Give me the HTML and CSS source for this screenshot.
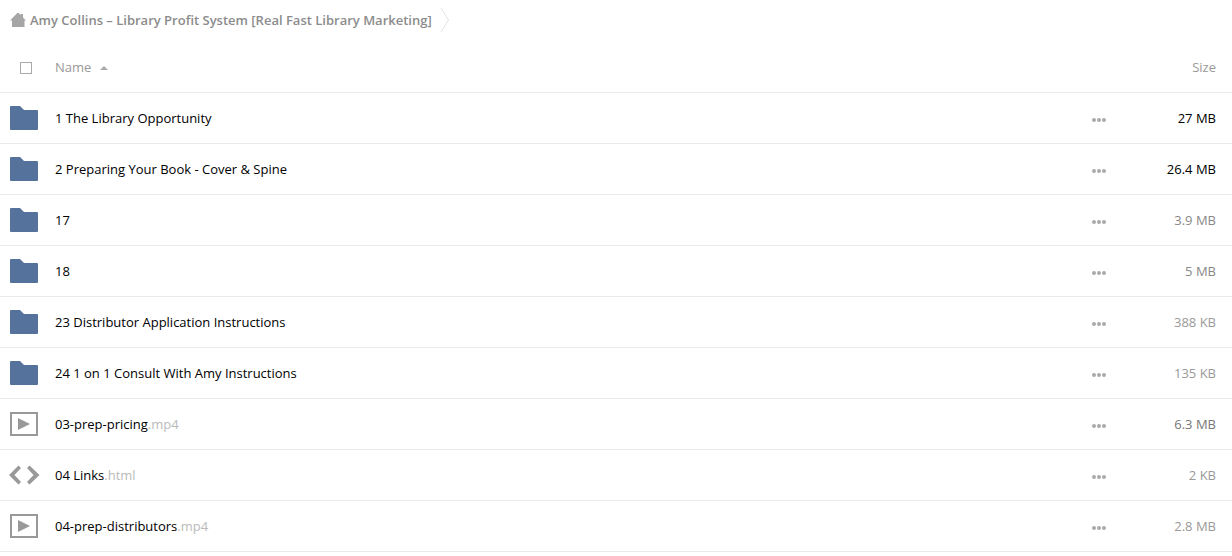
FILE: index.html
```html
<!DOCTYPE html>
<html lang="en">
    <head>
        <meta charset="utf-8">
        <title>Files</title>
        <link rel="stylesheet" href="styles.css">
    </head>
    <body>
        <nav class="breadcrumb">
            <a class="crumb" href="#">
                <svg class="home" width="16" height="14" viewBox="0 0 16 14"><path d="M7.300 0h1.200L10.500 2V1H13v3.500L16 7.500H14.500V14H2V7.500H0z"/></svg>
                <span>Amy Collins – Library Profit System [Real Fast Library Marketing]</span>
            </a>
            <svg class="divider" width="10" height="26" viewBox="0 0 10 26"><path d="M1 1L8.500 13L1 25"/></svg>
        </nav>
        <table id="filelist">
            <thead>
                <tr>
                    <th class="select"><input type="checkbox" class="check" aria-label="Select all"></th>
                    <th class="name"><button class="sort">Name <span class="arrow"></span></button></th>
                    <th class="actions"></th>
                    <th class="size"><button class="sort">Size</button></th>
                </tr>
            </thead>
            <tbody id="files"></tbody>
        </table>
        <script src="files.js"></script>
    </body>
</html>
```

FILE: styles.css
```css
body {
    margin: 0;
    font-family: "Open Sans", "Noto Sans", sans-serif;
    font-size: 13px;
    line-height: 20px;
    background: #fff;
    color: #000;
}

/* path bar */
.breadcrumb {
    display: flex;
    align-items: center;
    height: 40px;
    padding: 0 10px;
    margin-bottom: 3px;
    gap: 8px;
}
.crumb {
    display: flex;
    align-items: center;
    gap: 4px;
    font-weight: 600;
    color: #8c8c8c;
    text-decoration: none;
}
.home {
    fill: #a6a6a6;
}
.divider {
    fill: none;
    stroke: #e3e3e3;
}

/* file list */
#filelist {
    width: 100%;
    border-spacing: 0;
    table-layout: fixed;
}
#filelist th, #filelist td {
    height: 50px;
    padding: 0;
    border-bottom: 1px solid #ebebeb;
    text-align: left;
    font-weight: normal;
}
#filelist th {
    height: 49px;
    color: #999;
}
#filelist .select {
    width: 55px;
}
#filelist .actions {
    width: 50px;
    text-align: center;
}
#filelist .size {
    width: 92px;
    padding-right: 16px;
    text-align: right;
}
.check {
    appearance: none;
    display: block;
    width: 12px;
    height: 12px;
    margin: 0 0 0 20px;
    border: 1px solid #aaa;
    background: #fff;
}
.sort {
    padding: 0 0 2px;
    border: 0;
    background: none;
    font: inherit;
    color: inherit;
}
.arrow {
    display: inline-block;
    margin-left: 5px;
    vertical-align: 2px;
    border: 4px solid transparent;
    border-top: 0;
    border-bottom-color: #aaa;
}
.icon {
    display: block;
    margin-left: 9px;
}
.folder {
    fill: #54729b;
}
.video, .code {
    fill: #999;
}
.more {
    display: block;
    margin: 0 auto;
    padding: 3px 0 0;
    border: 0;
    background: none;
}
.more svg {
    display: block;
    fill: #aaa;
}
.ext {
    color: #bbb;
}

/* the smaller the file, the paler its size */
.large {
    color: #000;
}
.medium {
    color: #777;
}
.normal {
    color: #888;
}
.small {
    color: #999;
}
```

FILE: files.js
```javascript
const icons = {
    folder: '<path d="M1 1q0-1 1-1h9l4 4h13q1 0 1 1v18q0 1-1 1H2q-1 0-1-1z"/>',
    video: '<path fill-rule="evenodd" d="M1 0h28v24H1zM3 2v20h24V2z"/><path d="M9 6l12 6l-12 6z"/>',
    code: '<path d="M9.500 2.500L12 5L5.500 12L12 19L9.500 21.500L0 12zM20.500 2.500L18 5L24.500 12L18 19L20.500 21.500L30.500 12z"/>'
}

// icon, name, extension, size, shade of the size
const files = [
    ['folder', '1 The Library Opportunity', '', '27 MB', 'large'],
    ['folder', '2 Preparing Your Book - Cover & Spine', '', '26.4 MB', 'large'],
    ['folder', '17', '', '3.9 MB', 'normal'],
    ['folder', '18', '', '5 MB', 'normal'],
    ['folder', '23 Distributor Application Instructions', '', '388 KB', 'small'],
    ['folder', '24 1 on 1 Consult With Amy Instructions', '', '135 KB', 'small'],
    ['video', '03-prep-pricing', '.mp4', '6.3 MB', 'medium'],
    ['code', '04 Links', '.html', '2 KB', 'small'],
    ['video', '04-prep-distributors', '.mp4', '2.8 MB', 'small']
]

const table = document.getElementById('files')
for(let i=0;i<files.length;i++){
    const [icon, name, ext, size, shade] = files[i]
    let row = table.insertRow(i)
    row.insertCell(0).innerHTML = `<svg class="icon ${icon}" width="31" height="24" viewBox="0 0 31 24">${icons[icon]}</svg>`

    let name_cell = row.insertCell(1)
    name_cell.className = "name"
    name_cell.innerText = name
    if(ext){
        let ext_span = document.createElement('span')
        ext_span.className = "ext"
        ext_span.innerText = ext
        name_cell.appendChild(ext_span)
    }

    let actions_cell = row.insertCell(2)
    actions_cell.className = "actions"
    actions_cell.innerHTML = '<button class="more" aria-label="Actions"><svg width="14" height="4" viewBox="0 0 14 4"><circle cx="2" cy="2" r="2"/><circle cx="7" cy="2" r="2"/><circle cx="12" cy="2" r="2"/></svg></button>'

    let size_cell = row.insertCell(3)
    size_cell.className = "size " + shade
    size_cell.innerText = size
}
```
